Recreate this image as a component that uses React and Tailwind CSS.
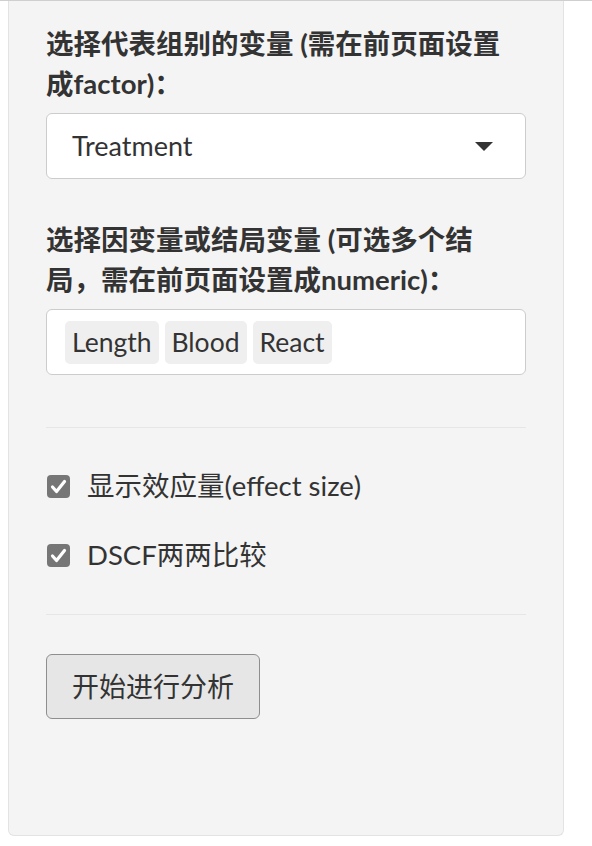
import React from "react";

const font = { fontFamily: 'Lato, "Noto Sans CJK SC", sans-serif' };

const CheckBox = () => (
  <svg width="23" height="23" viewBox="0 0 23 23" className="shrink-0">
    <rect x="0" y="0" width="23" height="23" rx="4" fill="#767676" />
    <path
      d="M5.5 12 L9.5 16.5 L17.5 6.5"
      fill="none"
      stroke="#fff"
      strokeWidth="3.2"
      strokeLinecap="round"
      strokeLinejoin="round"
    />
  </svg>
);

const Check = ({ label }) => (
  <label className="flex h-[40px] items-center gap-[17px] pl-[1px] text-[27.5px] leading-[40px] text-[#333]">
    <CheckBox />
    <span>{label}</span>
  </label>
);

const App = () => {
  return (
    <div
      className="min-h-[846px] w-full border-t border-[#cfcfcf] bg-white"
      style={font}
    >
      <div className="ml-[8px] w-[556px] rounded-b-[6px] border border-t-0 border-[#e3e3e3] bg-[#f4f4f4] px-[37px] pt-[23px] pb-[116px] text-[#333]">
        {/* group variable */}
        <div className="mb-[9px] text-[27.5px] font-bold leading-[40px]">
          选择代表组别的变量 (需在前页面设置
          <br />
          成factor)：
        </div>
        <div className="flex h-[66px] items-center justify-between rounded-[6px] border border-[#cccccc] bg-white pl-[25px] pr-[32px]">
          <span className="text-[27px] leading-[40px]">Treatment</span>
          <svg width="18" height="9" viewBox="0 0 18 9">
            <path d="M0 0 L18 0 L9 9 Z" fill="#333" />
          </svg>
        </div>

        {/* outcome variables */}
        <div className="mt-[41px] mb-[9px] text-[27.5px] font-bold leading-[40px]">
          选择因变量或结局变量 (可选多个结
          <br />
          局，需在前页面设置成numeric)：
        </div>
        <div className="flex h-[66px] items-center gap-[6px] rounded-[6px] border border-[#cccccc] bg-white pl-[18px]">
          {["Length", "Blood", "React"].map((t) => (
            <span
              key={t}
              className="flex h-[43px] items-center rounded-[5px] bg-[#efefef] px-[7px] text-[26.5px] leading-[40px]"
            >
              {t}
            </span>
          ))}
        </div>

        <hr className="mt-[52px] border-0 border-t border-[#e6e6e6]" />

        <div className="mt-[38px]">
          <Check label="显示效应量(effect size)" />
        </div>
        <div className="mt-[29px]">
          <Check label="DSCF两两比较" />
        </div>

        <hr className="mt-[39px] border-0 border-t border-[#e6e6e6]" />

        <button className="mt-[39px] flex h-[65px] items-center rounded-[6px] border border-[#8e8e8e] bg-[#e6e6e6] px-[25px] text-[27px] leading-[40px] text-[#333]">
          开始进行分析
        </button>
      </div>
    </div>
  );
};

export default App;
